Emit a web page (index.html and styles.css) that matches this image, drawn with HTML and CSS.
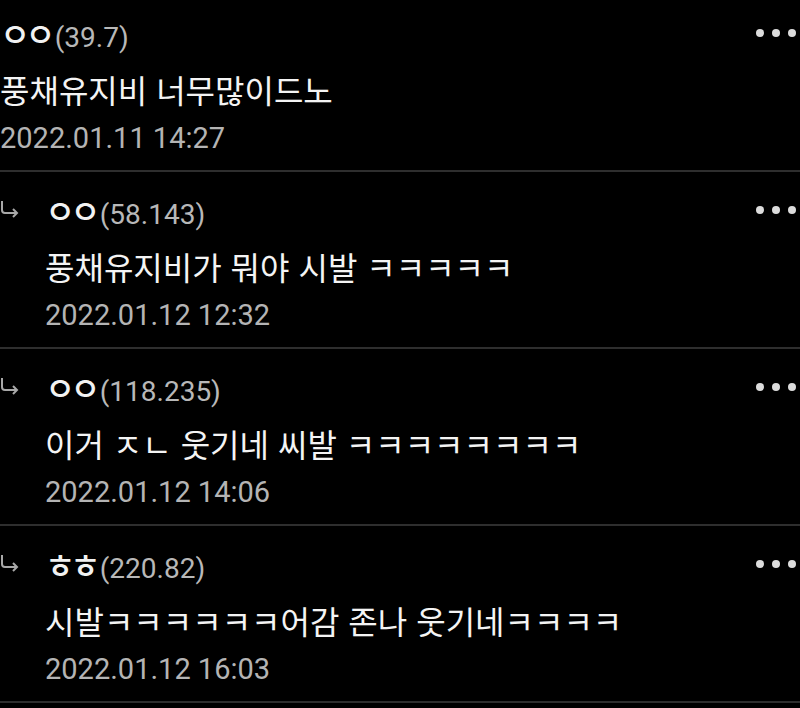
FILE: index.html
```html
<!DOCTYPE html>
<html lang="ko">
<head>
    <meta charset="UTF-8">
    <meta name="viewport" content="width=device-width, initial-scale=1.0">
    <title>댓글</title>
    <link rel="stylesheet" href="styles.css">
</head>
<body>

    <ul class="comments">
        <li class="comment">
            <div class="body">
                <div class="writer"><span class="nick">ㅇㅇ</span>(39.7)</div>
                <div class="text">풍채유지비 너무많이드노</div>
                <div class="date">2022.01.11 14:27</div>
            </div>
            <span class="more"><i></i><i></i><i></i></span>
        </li>
        <li class="comment reply">
            <svg class="arrow" width="20" height="18" viewBox="0 0 20 18"><path d="M2 1 V10 Q2 13 5 13 H17 M13 9 L17 13 L13 17" fill="none" stroke="#a8a8a8" stroke-width="2"/></svg>
            <div class="body">
                <div class="writer"><span class="nick">ㅇㅇ</span>(58.143)</div>
                <div class="text">풍채유지비가 뭐야 시발 ㅋㅋㅋㅋㅋ</div>
                <div class="date">2022.01.12 12:32</div>
            </div>
            <span class="more"><i></i><i></i><i></i></span>
        </li>
        <li class="comment reply">
            <svg class="arrow" width="20" height="18" viewBox="0 0 20 18"><path d="M2 1 V10 Q2 13 5 13 H17 M13 9 L17 13 L13 17" fill="none" stroke="#a8a8a8" stroke-width="2"/></svg>
            <div class="body">
                <div class="writer"><span class="nick">ㅇㅇ</span>(118.235)</div>
                <div class="text">이거 ㅈㄴ 웃기네 씨발 ㅋㅋㅋㅋㅋㅋㅋㅋ</div>
                <div class="date">2022.01.12 14:06</div>
            </div>
            <span class="more"><i></i><i></i><i></i></span>
        </li>
        <li class="comment reply">
            <svg class="arrow" width="20" height="18" viewBox="0 0 20 18"><path d="M2 1 V10 Q2 13 5 13 H17 M13 9 L17 13 L13 17" fill="none" stroke="#a8a8a8" stroke-width="2"/></svg>
            <div class="body">
                <div class="writer"><span class="nick">ㅎㅎ</span>(220.82)</div>
                <div class="text">시발ㅋㅋㅋㅋㅋㅋ어감 존나 웃기네ㅋㅋㅋㅋ</div>
                <div class="date">2022.01.12 16:03</div>
            </div>
            <span class="more"><i></i><i></i><i></i></span>
        </li>
    </ul>

</body>
</html>
```

FILE: styles.css
```css
body {
    margin: 0;
    background-color: #000;
    font-family: Roboto, "Noto Sans CJK KR", sans-serif;
    overflow: hidden;
}

.comments {
    list-style: none;
    margin: -5px 0 0 0;
    padding: 0;
}

.comment {
    display: flex;
    align-items: flex-start;
    padding: 12px 0 13px 0;
    border-bottom: 2px solid #2e2e2e;
}

.body {
    flex: 1;
}

.reply .body {
    padding-left: 25px;
}

.arrow {
    flex: none;
    margin-top: 16px;
}

.writer {
    height: 52px;
    line-height: 52px;
    font-size: 28px;
    color: #b8b8b8;
}

.nick {
    color: #f2f2f2;
    font-family: "Noto Sans CJK KR", sans-serif;
    font-size: 33px;
    font-weight: 500;
    letter-spacing: -5px;
    margin-right: 4px;
}

.text {
    height: 60px;
    line-height: 60px;
    font-size: 32px;
    color: #f4f4f4;
    font-family: "Noto Sans CJK KR", sans-serif;
    white-space: nowrap;
}

.date {
    height: 38px;
    line-height: 38px;
    font-size: 29px;
    color: #b4b4b4;
}

.more {
    display: flex;
    gap: 8px;
    height: 52px;
    align-items: center;
    padding-right: 4px;
}

.more i {
    width: 8px;
    height: 8px;
    border-radius: 50%;
    background-color: #dcdcdc;
}
```
